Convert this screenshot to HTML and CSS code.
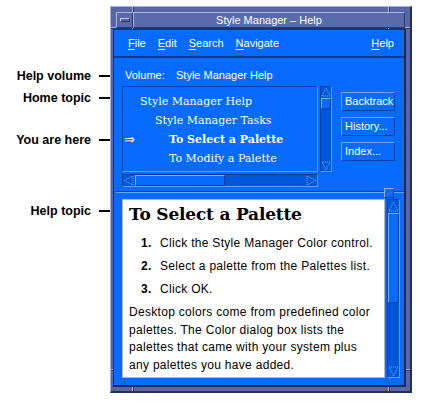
FILE: index.html
```html
<!DOCTYPE html>
<html>
<head>
<meta charset="utf-8">
<link rel="stylesheet" href="styles.css">
</head>
<body>
<div class="stage">
  <div class="callout c1">Help volume</div>
  <div class="callout c2">Home topic</div>
  <div class="callout c3">You are here</div>
  <div class="callout c4">Help topic</div>

  <div class="window">
    <div class="titlebar">
      <div class="wm-menu"><span class="wm-bar"></span></div>
      <div class="wm-title">Style Manager – Help</div>
    </div>
    <div class="client">
      <div class="menubar">
        <span class="menu"><u>F</u>ile</span>
        <span class="menu"><u>E</u>dit</span>
        <span class="menu"><u>S</u>earch</span>
        <span class="menu"><u>N</u>avigate</span>
        <span class="menu menu-help"><u>H</u>elp</span>
      </div>
      <div class="volume">
        <span class="volume-label">Volume:</span>
        <span>Style Manager Help</span>
      </div>
      <div class="topics-row">
        <div class="topics-pane">
          <div class="topic-list">
            <div class="topic lvl1">Style Manager Help</div>
            <div class="topic lvl2">Style Manager Tasks</div>
            <div class="topic current"><span class="here">⇒</span>To Select a Palette</div>
            <div class="topic lvl3">To Modify a Palette</div>
          </div>
          <div class="vscroll">
            <div class="arrow"><svg width="10" height="10" viewBox="0 0 10 10"><path d="M5 1 L1 9 H9 Z" fill="none" stroke="#7db0ff" stroke-dasharray="1 1"/></svg></div>
            <div class="slider-v"></div>
            <div class="trough-fill"></div>
            <div class="arrow"><svg width="10" height="10" viewBox="0 0 10 10"><path d="M5 9 L1 1 H9 Z" fill="none" stroke="#7db0ff" stroke-dasharray="1 1"/></svg></div>
          </div>
          <div class="hscroll">
            <div class="arrow"><svg width="11" height="11" viewBox="0 0 11 11"><path d="M1 5.5 L10 1 V10 Z" fill="none" stroke="#7db0ff" stroke-dasharray="1 1"/></svg></div>
            <div class="slider-h"></div>
            <div class="trough-fill"></div>
            <div class="arrow"><svg width="11" height="11" viewBox="0 0 11 11"><path d="M10 5.5 L1 1 V10 Z" fill="none" stroke="#7db0ff" stroke-dasharray="1 1"/></svg></div>
          </div>
        </div>
        <div class="buttons">
          <div class="btn">Backtrack</div>
          <div class="btn">History...</div>
          <div class="btn">Index...</div>
        </div>
      </div>
      <div class="sash"><div class="sash-line"></div><div class="sash-box"></div></div>
      <div class="help-row">
        <div class="help-text">
          <h1 class="help-title">To Select a Palette</h1>
          <ol class="steps">
            <li><span class="num">1.</span>Click the Style Manager Color control.</li>
            <li><span class="num">2.</span>Select a palette from the Palettes list.</li>
            <li><span class="num">3.</span>Click OK.</li>
          </ol>
          <p class="para">Desktop colors come from predefined color<br>palettes. The Color dialog box lists the<br>palettes that came with your system plus<br>any palettes you have added.</p>
        </div>
        <div class="vscroll help-vscroll">
          <div class="arrow"><svg width="11" height="11" viewBox="0 0 11 11"><path d="M5.5 1 L1 10 H10 Z" fill="none" stroke="#7db0ff" stroke-dasharray="1 1"/></svg></div>
          <div class="slider-v help-slider"></div>
          <div class="trough-fill"></div>
          <div class="arrow"><svg width="11" height="11" viewBox="0 0 11 11"><path d="M5.5 10 L1 1 H10 Z" fill="none" stroke="#7db0ff" stroke-dasharray="1 1"/></svg></div>
        </div>
      </div>
    </div>
  </div>
</div>
</body>
</html>
```
FILE: styles.css
```css
* { box-sizing: border-box; }
html, body { margin: 0; padding: 0; background: #fff; }
body {
  width: 426px;
  height: 406px;
  overflow: hidden;
  font-family: "Liberation Sans", Arial, sans-serif;
}
.stage {
  position: relative;
  padding: 6px 0 0 110px;
  height: 406px;
}

/* annotation callouts */
.callout {
  position: absolute;
  left: 0;
  width: 110px;
  display: flex;
  justify-content: flex-end;
  align-items: center;
  gap: 8px;
  font-size: 12.5px;
  font-weight: bold;
  line-height: 14px;
  color: #000;
}
.callout::after {
  content: "";
  width: 11px;
  height: 2px;
  background: #000;
}
.c1 { top: 69px; }
.c2 { top: 91px; }
.c3 { top: 133px; }
.c4 { top: 204px; }

/* window frame */
.window {
  width: 302px;
  height: 387px;
  border-style: solid;
  border-width: 1px 2px 2px 1px;
  border-color: #aab3d9 #262d58 #262d58 #aab3d9;
  background-color: #5867a6;
  background-image:
    linear-gradient(to right, transparent 21px, #aab3d9 21px, #aab3d9 22px, #2c3566 22px, #2c3566 23px, transparent 23px),
    linear-gradient(to right, transparent 277px, #aab3d9 277px, #aab3d9 278px, #2c3566 278px, #2c3566 279px, transparent 279px),
    linear-gradient(to bottom, transparent 20px, #aab3d9 20px, #aab3d9 21px, #2c3566 21px, #2c3566 22px, transparent 22px),
    linear-gradient(to bottom, transparent 362px, #aab3d9 362px, #aab3d9 363px, #2c3566 363px, #2c3566 364px, transparent 364px);
  padding: 5px 4px 4px 2px;
  display: flex;
  flex-direction: column;
}
.titlebar {
  display: flex;
  height: 16px;
  margin: 0 1px 1px 3px;
}
.wm-menu {
  width: 17px;
  border: 1px solid;
  border-color: #aab3d9 #2c3566 #2c3566 #aab3d9;
  background: #5a69a9;
  display: flex;
  align-items: center;
  justify-content: center;
}
.wm-bar {
  width: 10px;
  height: 4px;
  border: 1px solid;
  border-color: #c4cbe6 #2c3566 #2c3566 #c4cbe6;
  background: #5a69a9;
}
.wm-title {
  flex: 1;
  border: 1px solid;
  border-color: #aab3d9 #2c3566 #2c3566 #aab3d9;
  background: #5b6aaa;
  color: #fff;
  font-size: 11px;
  line-height: 14px;
  text-align: center;
}

/* client area */
.client {
  flex: 1;
  background: #076bff;
  border-style: solid;
  border-width: 1px 2px 2px 1px;
  border-color: #25305e #1d2650 #1d2650 #25305e;
  display: flex;
  flex-direction: column;
  color: #fff;
  font-size: 11px;
}
.menubar {
  height: 28px;
  border-bottom: 2px solid #003a99;
  display: flex;
  align-items: center;
  gap: 12px;
  padding: 0 10px 0 14px;
  line-height: 14px;
}
.menu u { text-underline-offset: 2px; }
.menu-help { margin-left: auto; }

.volume {
  margin-top: 10px;
  padding-left: 11px;
  line-height: 14px;
  display: flex;
}
.volume-label { width: 51px; }

.topics-row {
  margin-top: 4px;
  padding-left: 8px;
  display: flex;
}
.topics-pane {
  display: grid;
  grid-template-columns: 196px 12px;
  grid-template-rows: 86px 13px;
  column-gap: 2px;
  row-gap: 2px;
}
.topic-list {
  border: 1px solid;
  border-color: #0042b0 #5f9fff #5f9fff #0042b0;
  padding-top: 5px;
  font-family: "DejaVu Serif", "Liberation Serif", serif;
  font-size: 11px;
  line-height: 19px;
  white-space: nowrap;
}
.lvl1 { padding-left: 17px; }
.lvl2 { padding-left: 32px; }
.lvl3 { padding-left: 46px; }
.current { padding-left: 1px; font-weight: bold; display: flex; }
.here {
  width: 45px;
  font-weight: normal;
  font-family: "DejaVu Sans", sans-serif;
  font-size: 13px;
}

.vscroll {
  background: #0057d9;
  border: 1px solid;
  border-color: #003f9f #5f9fff #5f9fff #003f9f;
  display: flex;
  flex-direction: column;
}
.hscroll {
  background: #0057d9;
  border: 1px solid;
  border-color: #003f9f #5f9fff #5f9fff #003f9f;
  display: flex;
}
.arrow {
  display: flex;
  align-items: center;
  justify-content: center;
  flex: none;
}
.vscroll .arrow { height: 10px; }
.hscroll .arrow { width: 11px; }
.arrow svg { display: block; }
.trough-fill { flex: 1; }
.slider-v {
  height: 11px;
  margin-top: 1px;
  background: #076bff;
  border: 1px solid;
  border-color: #7db0ff #003f9f #003f9f #7db0ff;
}
.slider-h {
  width: 90px;
  margin-left: 1px;
  background: #076bff;
  border: 1px solid;
  border-color: #7db0ff #003f9f #003f9f #7db0ff;
}

.buttons {
  margin: 6px 0 0 9px;
  display: flex;
  flex-direction: column;
  gap: 6px;
}
.btn {
  width: 54px;
  height: 19px;
  border: 1px solid;
  border-color: #6aa6ff #0040a8 #0040a8 #6aa6ff;
  padding-left: 3px;
  line-height: 17px;
  white-space: nowrap;
}

.sash {
  position: relative;
  height: 12px;
}
.sash-line {
  margin: 4px 0 0 2px;
  height: 2px;
  border-top: 1px solid #003a99;
  border-bottom: 1px solid #6aa6ff;
}
.sash-box {
  position: absolute;
  left: 270px;
  top: 1px;
  width: 10px;
  height: 10px;
  background: #076bff;
  border: 1px solid;
  border-color: #8ab8ff #003f9f #003f9f #8ab8ff;
}

.help-row {
  display: flex;
  height: 179px;
  padding-left: 8px;
  gap: 2px;
}
.help-text {
  width: 263px;
  background: #fff;
  border: 1px solid #b8b8b8;
  padding: 4px 6px;
  color: #000;
  overflow: hidden;
  white-space: nowrap;
}
.help-title {
  margin: 0 0 8px;
  font-family: "DejaVu Serif", "Liberation Serif", serif;
  font-size: 17px;
  line-height: 20px;
  font-weight: bold;
  letter-spacing: -0.2px;
}
.steps {
  list-style: none;
  margin: 0;
  padding: 0 0 0 12px;
  font-size: 12px;
  letter-spacing: 0.3px;
}
.steps li {
  display: flex;
  line-height: 23px;
}
.num {
  width: 19px;
  font-weight: bold;
}
.para {
  margin: 3px 0 0;
  font-size: 12px;
  line-height: 17.7px;
  letter-spacing: 0.3px;
}
.help-vscroll { width: 13px; }
.help-vscroll .arrow { height: 12px; }
.help-slider {
  height: 90px;
  margin-top: 1px;
}
```
